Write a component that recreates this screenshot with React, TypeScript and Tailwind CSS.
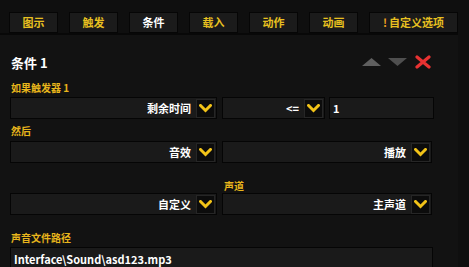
import React from "react";

const FONT = { fontFamily: '"Noto Sans CJK SC", "Noto Sans", sans-serif' };

function Chevron() {
  return (
    <svg width="13" height="9" viewBox="0 0 13 9">
      <path d="M1.5 1.5 L6.5 6.5 L11.5 1.5" fill="none" stroke="#f2c318" strokeWidth="3" strokeLinecap="square" />
    </svg>
  );
}

function Select({ text, className }: { text: string; className: string }) {
  return (
    <div className={`flex items-center justify-end h-[22px] bg-[#1a1a1a] border border-[#050505] pr-[1px] ${className}`}>
      <span className="text-[11px] font-bold text-white leading-none mr-[5px]">{text}</span>
      <div className="w-[19px] h-[19px] bg-[#0c0c0c] border border-[#262626] flex items-center justify-center">
        <Chevron />
      </div>
    </div>
  );
}

function Label({ text, className = "" }: { text: string; className?: string }) {
  return <div className={`h-[10px] text-[10px] font-bold text-[#e8b51c] leading-none ${className}`}>{text}</div>;
}

const tabs = ["图示", "触发", "条件", "载入", "动作", "动画"];

export default function App() {
  return (
    <div className="w-[469px] h-[267px] bg-[#0f0f0f] overflow-hidden" style={FONT}>
      <div className="flex gap-[11px] pl-[9px] pt-[12px]">
        {tabs.map((t) => (
          <div
            key={t}
            className={`w-[49px] h-[21px] bg-[#1b1b1b] border border-[#060606] flex items-center justify-center text-[11px] font-bold leading-none ${
              t === "条件" ? "text-white" : "text-[#e8c020]"
            }`}
          >
            {t}
          </div>
        ))}
        <div className="w-[89px] h-[21px] bg-[#1b1b1b] border border-[#060606] flex items-center justify-center text-[11px] font-bold leading-none text-[#e8c020]">
          <span className="text-[#f0a020] mr-[2px]">!</span>自定义选项
        </div>
      </div>
      <div className="h-[2px] bg-[#080808] mr-[11px]" />
      <div className="bg-[#121212] mr-[11px] pl-[10px] pr-[24px] h-[240px]">
        <div className="flex items-center justify-between pt-[8px] h-[46px]">
          <div className="text-[13px] font-bold text-white leading-none pl-[1px]">条件 1</div>
          <div className="flex items-center gap-[7px] pr-[3px]">
            <svg width="19" height="8" viewBox="0 0 19 8"><path d="M0 8 L9.5 0 L19 8 Z" fill="#5f5f5f" /></svg>
            <svg width="19" height="8" viewBox="0 0 19 8"><path d="M0 0 L19 0 L9.5 8 Z" fill="#4f4f4f" /></svg>
            <svg width="16" height="14" viewBox="0 0 16 14" className="ml-[1px]">
              <path d="M2 2 L14 12 M14 2 L2 12" stroke="#e83232" strokeWidth="3.2" strokeLinecap="round" />
            </svg>
          </div>
        </div>
        <Label text="如果触发器 1" className="mt-[2px] pl-[1px]" />
        <div className="flex mt-[4px]">
          <Select text="剩余时间" className="w-[207px]" />
          <Select text="<=" className="w-[103px] ml-[5px]" />
          <div className="w-[105px] ml-[4px] h-[22px] bg-[#1a1a1a] border border-[#050505] flex items-center pl-[3px] text-[11px] font-bold text-white leading-none">1</div>
        </div>
        <Label text="然后" className="mt-[7px] pl-[1px]" />
        <div className="flex mt-[5px]">
          <Select text="音效" className="w-[207px]" />
          <Select text="播放" className="w-[210px] ml-[5px]" />
        </div>
        <div className="flex mt-[18px]">
          <div className="w-[207px]" />
          <Label text="声道" className="ml-[7px]" />
        </div>
        <div className="flex mt-[2px]">
          <Select text="自定义" className="w-[207px]" />
          <Select text="主声道" className="w-[210px] ml-[5px]" />
        </div>
        <Label text="声音文件路径" className="mt-[18px] pl-[1px]" />
        <div className="mt-[4px] h-[24px] w-[423px] bg-[#1a1a1a] border border-[#050505] flex items-center pl-[3px] text-[11px] font-bold text-white leading-none">
          Interface\Sound\asd123.mp3
        </div>
      </div>
    </div>
  );
}
